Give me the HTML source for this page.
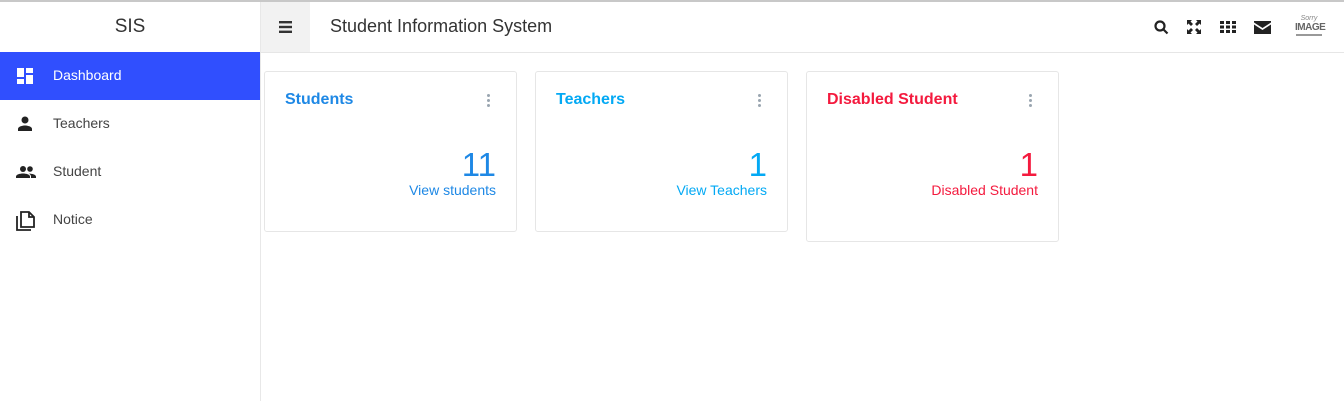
<!DOCTYPE html>
<html><head><style>
*{margin:0;padding:0;box-sizing:border-box}
body{width:1344px;height:401px;overflow:hidden;background:#fff;font-family:"Liberation Sans",Roboto,sans-serif;position:relative}
.abs{position:absolute}
.side{left:0;top:0;width:261px;height:401px;border-right:1px solid #e8e8e8}
.logo{left:0;top:2px;width:260px;height:50px;text-align:center;line-height:50px;font-size:19px;color:#333}
.nav{left:0;width:260px;height:48px;font-size:14px;color:#444}
.nav span{position:absolute;left:53px;top:15px}
.nav svg{position:absolute;left:16px;top:15px}
.top{left:261px;top:0;right:0;height:53px;border-bottom:1px solid #e6e6e6}
.ham{left:261px;top:2px;width:49px;height:50px;background:#f2f2f2}
.card{border:1px solid #e6e6e6;border-radius:3px;background:#fff;width:253px}
.card h3{position:absolute;left:20px;top:19px;font-size:16px;font-weight:bold}
.card .n{position:absolute;right:20px;top:74px;font-size:33px}
.card .l{position:absolute;right:20px;top:110px;font-size:14px}
.dots{position:absolute;right:26px;top:22px;width:3px}
.dots i{display:block;width:3px;height:3px;border-radius:50%;background:#9aa5b0;margin-bottom:2px}
</style></head><body>
<div class="abs side"></div>
<div class="abs" style="left:0;top:0;width:1344px;height:2px;background:#c8c8c8"></div>
<div class="abs logo">SIS</div>
<div class="abs nav" style="top:52px;background:#304ffe;color:#fff"><svg width="18" height="18" viewBox="0 0 18 18" fill="#fff"><rect x="1" y="1" width="7" height="9"/><rect x="10" y="1" width="7" height="5"/><rect x="1" y="12" width="7" height="5"/><rect x="10" y="8" width="7" height="9"/></svg><span>Dashboard</span></div>
<div class="abs nav" style="top:100px"><svg width="18" height="18" viewBox="0 0 18 18" fill="#222"><circle cx="9" cy="5" r="3.5"/><path d="M2 16v-2c0-2.5 4.5-3.5 7-3.5s7 1 7 3.5v2z"/></svg><span>Teachers</span></div>
<div class="abs nav" style="top:148px"><svg width="20" height="18" viewBox="0 0 20 18" fill="#222"><circle cx="7" cy="6" r="3"/><circle cx="14" cy="6" r="2.8"/><path d="M0 15v-1.5C0 11.5 4 10.5 7 10.5s7 1 7 3V15z"/><path d="M13 10.6c3 0 7 1 7 3V15h-5v-1.5c0-1.2-.8-2.2-2-2.9z"/></svg><span>Student</span></div>
<div class="abs nav" style="top:196px"><svg width="20" height="20" viewBox="0 0 20 20" fill="none" stroke="#222" stroke-width="1.8"><path d="M1 5v14h14"/><path d="M5 1h8l5 5v10H5z"/><path d="M13 1v5h5"/></svg><span>Notice</span></div>
<div class="abs top"></div>
<div class="abs ham"><svg style="position:absolute;left:18px;top:19px" width="13" height="12" viewBox="0 0 13 12" fill="#333"><rect y="0" width="13" height="2.4"/><rect y="4.8" width="13" height="2.4"/><rect y="9.6" width="13" height="2.4"/></svg></div>
<div class="abs" style="left:330px;top:16px;font-size:18px;color:#333">Student Information System</div>
<svg class="abs" style="left:1154px;top:20px" width="15" height="15" viewBox="0 0 15 15" fill="none" stroke="#222" stroke-width="2.2"><circle cx="6" cy="6" r="4.5"/><path d="M9.5 9.5l4 4"/></svg>
<svg class="abs" style="left:1187px;top:20px" width="14" height="14" viewBox="0 0 14 14" fill="#222"><path d="M0 0h5L3.5 1.5 6 4 4 6 1.5 3.5 0 5zM14 0v5l-1.5-1.5L10 6 8 4l2.5-2.5L9 0zM0 14V9l1.5 1.5L4 8l2 2-2.5 2.5L5 14zM14 14H9l1.5-1.5L8 10l2-2 2.5 2.5L14 9z"/></svg>
<svg class="abs" style="left:1220px;top:21px" width="16" height="12" viewBox="0 0 16 12" fill="#222"><rect x="0" y="0" width="4" height="3"/><rect x="6" y="0" width="4" height="3"/><rect x="12" y="0" width="4" height="3"/><rect x="0" y="4.5" width="4" height="3"/><rect x="6" y="4.5" width="4" height="3"/><rect x="12" y="4.5" width="4" height="3"/><rect x="0" y="9" width="4" height="3"/><rect x="6" y="9" width="4" height="3"/><rect x="12" y="9" width="4" height="3"/></svg>
<svg class="abs" style="left:1254px;top:21px" width="17" height="13" viewBox="0 0 17 13" fill="#222"><path d="M0 0h17v1.5L8.5 7 0 1.5z"/><path d="M0 3.5l8.5 5.5 8.5-5.5V13H0z"/></svg>
<div class="abs" style="left:1296px;top:15px;width:26px;font-size:7px;color:#888;font-style:italic;text-align:center">Sorry</div>
<div class="abs" style="left:1295px;top:22px;width:28px;font-size:10px;font-weight:bold;color:#666;letter-spacing:-0.5px;text-align:center;line-height:12px">IMAGE</div>
<div class="abs" style="left:1296px;top:34px;width:26px;height:2px;background:#999"></div>
<div class="abs card" style="left:264px;top:71px;height:161px"><h3 style="color:#1e88e5">Students</h3><div class="dots"><i></i><i></i><i></i></div><div class="n" style="color:#1e88e5">11</div><div class="l" style="color:#1e88e5">View students</div></div>
<div class="abs card" style="left:535px;top:71px;height:161px"><h3 style="color:#03a9f4">Teachers</h3><div class="dots"><i></i><i></i><i></i></div><div class="n" style="color:#03a9f4">1</div><div class="l" style="color:#03a9f4">View Teachers</div></div>
<div class="abs card" style="left:806px;top:71px;height:171px"><h3 style="color:#f41a3e">Disabled Student</h3><div class="dots"><i></i><i></i><i></i></div><div class="n" style="color:#f41a3e">1</div><div class="l" style="color:#f41a3e">Disabled Student</div></div>
</body></html>
